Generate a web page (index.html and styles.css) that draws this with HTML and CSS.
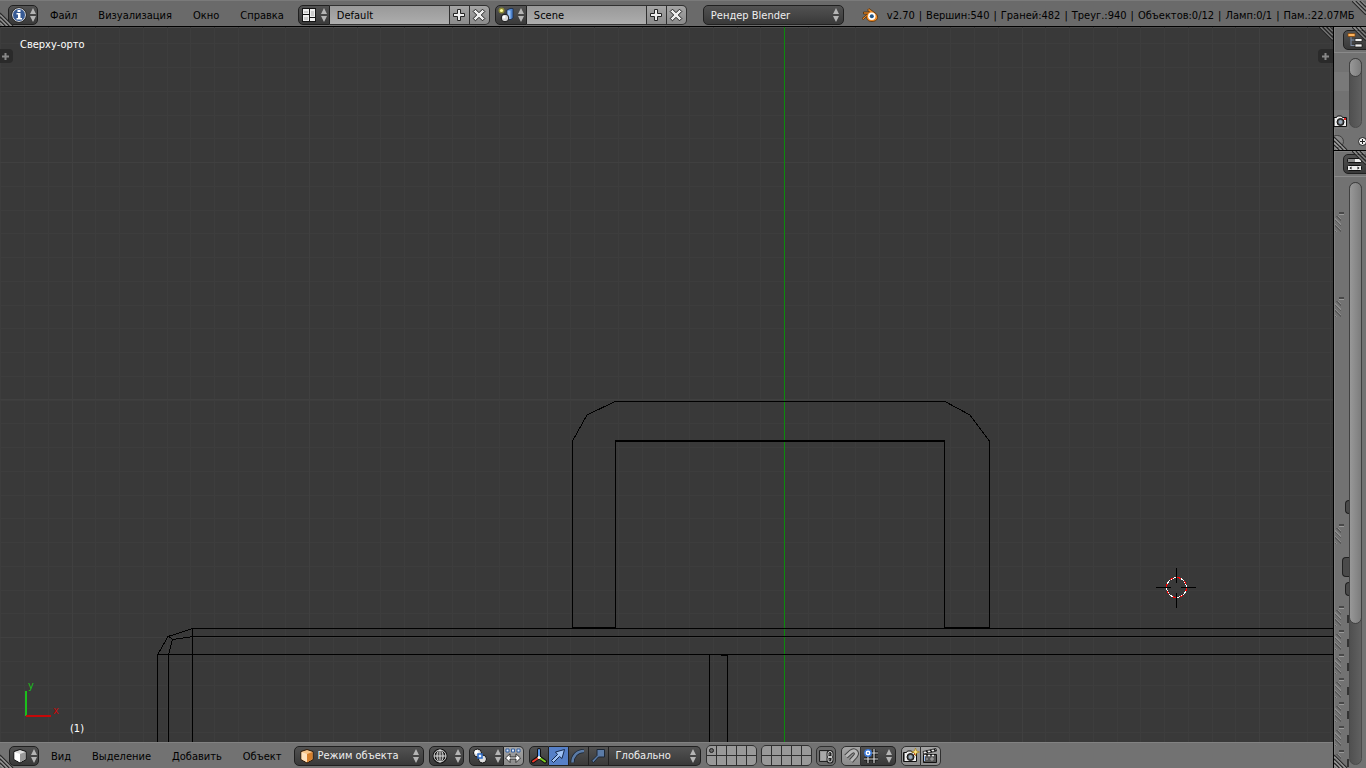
FILE: index.html
```html
<!DOCTYPE html>
<html lang="ru">
<head>
    <meta charset="utf-8">
    <title>Blender</title>
    <link rel="stylesheet" href="styles.css">
</head>

<body>

    <!-- shared shapes -->
    <svg class="defs" width="0" height="0" aria-hidden="true">
        <symbol id="arrows" viewBox="0 0 6 14">
            <path d="M3 0L6 6H0zM3 14L0 8H6z" fill="#b4b4b4"/>
        </symbol>
        <symbol id="corner-bl" viewBox="0 0 14 14">
            <path d="M0 1L13 14M0 5L9 14M0 9L5 14" stroke="#2a2a2a" stroke-width="1.3"/>
            <path d="M0 2.500L11.500 14M0 6.500L7.500 14M0 10.500L3.500 14" stroke="#b0b0b0"/>
        </symbol>
        <symbol id="corner-tr" viewBox="0 0 14 14">
            <path d="M0 0L14 14M4 0L14 10M8 0L14 6" stroke="#2a2a2a" stroke-width="1.3"/>
            <path d="M1.500 0L14 12.500M5.500 0L14 8.500M9.500 0L14 4.500" stroke="#a0a0a0"/>
        </symbol>
        <symbol id="plus" viewBox="0 0 16 16">
            <path d="M6.500 2.500h3v4h4v3h-4v4h-3v-4h-4v-3h4z" fill="#eee" stroke="#222"/>
        </symbol>
        <symbol id="cross" viewBox="0 0 16 16">
            <path d="M4.500 2.200L8 5.700l3.500-3.500 2.300 2.300L10.300 8l3.500 3.500-2.300 2.300L8 10.300l-3.500 3.500-2.300-2.300L5.700 8 2.200 4.500z" fill="#eee" stroke="#222"/>
        </symbol>
        <symbol id="camera" viewBox="0 0 16 16">
            <path d="M1.500 4.500h3l1-1.500h4l1 1.500h4v9h-13z" fill="#eee" stroke="#111"/>
            <path d="M2.500 5v8" stroke="#777"/>
            <circle cx="8.500" cy="9" r="3.500" fill="#444" stroke="#111"/>
            <circle cx="8.500" cy="9" r="2" fill="#9ab"/>
            <path d="M12 6h2" stroke="#d22" stroke-width="2"/>
        </symbol>
    </svg>

    <header class="bar info">
        <button class="dark editor" aria-label="Тип редактора">
            <svg width="16" height="16" viewBox="0 0 16 16">
                <circle cx="8" cy="8" r="6.500" fill="#375a94" stroke="#e8e8e8"/>
                <circle cx="8" cy="8" r="7.400" fill="none" stroke="#222" stroke-width=".7"/>
                <path d="M6.500 3h3v2h-3zM5.500 6h4v5h1.500v1.500h-5.500V11H7V7.500H5.500z" fill="#fff"/>
            </svg>
            <svg class="arrows" width="6" height="14"><use href="#arrows"/></svg>
        </button>
        <nav class="menus">
            <button>Файл</button>
            <button>Визуализация</button>
            <button>Окно</button>
            <button>Справка</button>
        </nav>
        <div class="group datablock layouts">
            <button class="dark" aria-label="Экраны">
                <svg width="16" height="16" viewBox="0 0 16 16">
                    <path d="M1 1h14v14H1z" fill="#151515"/>
                    <path d="M2 2h6v5H2zM2 8h6v6H2zM9 2h5v8H9zM9 11h5v3H9z" fill="#eee"/>
                    <path d="M3 4h4v2H3zM3 10h4v3H3zM10 4h3v5h-3z" fill="#ccc"/>
                </svg>
                <svg class="arrows" width="6" height="14"><use href="#arrows"/></svg>
            </button>
            <input type="text" value="Default" aria-label="Экран">
            <button class="tool" aria-label="Добавить экран"><svg width="16" height="16"><use href="#plus"/></svg></button>
            <button class="tool" aria-label="Удалить экран"><svg width="16" height="16"><use href="#cross"/></svg></button>
        </div>
        <div class="group datablock">
            <button class="dark" aria-label="Сцены">
                <svg width="16" height="16" viewBox="0 0 16 16">
                    <path d="M9 3l3-1.500h3V11l-2 1.500H9z" fill="#4d82cc" stroke="#182a48" stroke-width=".8"/>
                    <path d="M9.500 3.500h3V12h-3z" fill="#9dc3f4"/>
                    <circle cx="3.500" cy="3.500" r="3" fill="#8d8b35"/>
                    <circle cx="3.500" cy="3.500" r="1.600" fill="#fffb9c"/>
                    <circle cx="7" cy="11" r="3.800" fill="#d8d8d8" stroke="#111"/>
                    <circle cx="6" cy="10" r="1.500" fill="#fff"/>
                </svg>
                <svg class="arrows" width="6" height="14"><use href="#arrows"/></svg>
            </button>
            <input type="text" value="Scene" aria-label="Сцена">
            <button class="tool" aria-label="Добавить сцену"><svg width="16" height="16"><use href="#plus"/></svg></button>
            <button class="tool" aria-label="Удалить сцену"><svg width="16" height="16"><use href="#cross"/></svg></button>
        </div>
        <div class="dark select engine">
            <select aria-label="Движок рендера"><option>Рендер Blender</option></select>
            <svg class="arrows" width="6" height="14"><use href="#arrows"/></svg>
        </div>
        <svg class="logo" width="18" height="16" viewBox="0 0 18 16">
            <path d="M1 11.500L6.500 7H2.500V5h6L6.500 3l1.500-1.500 6.500 4.700c4 3.500 2 8.300-3.500 8.300-4 0-5.800-2.500-5.500-5L2.500 12.500z" fill="#f08a24" stroke="#53300c" stroke-width=".8"/>
            <circle cx="10.800" cy="9.300" r="3.700" fill="#fff"/>
            <circle cx="10.800" cy="9.300" r="2" fill="#265787"/>
        </svg>
        <div class="stats">
            <span>v2.70</span>
            <span>|</span>
            <span>Вершин:540</span>
            <span>|</span>
            <span>Граней:482</span>
            <span>|</span>
            <span>Треуг.:940</span>
            <span>|</span>
            <span>Объектов:0/12</span>
            <span>|</span>
            <span>Ламп:0/1</span>
            <span>|</span>
            <span>Пам.:22.07МБ</span>
        </div>
        <svg class="corner bl" width="14" height="14"><use href="#corner-bl"/></svg>
        <svg class="corner tr" width="14" height="14"><use href="#corner-tr"/></svg>
    </header>

    <div class="workspace">

        <main class="editor3d">
            <section class="view">
                <svg class="scene" width="100%" height="100%">
                    <defs>
                        <pattern id="minor" x="24" y="40" width="95" height="95" patternUnits="userSpaceOnUse">
                            <path d="M.5 0V95M24.500 0V95M48.500 0V95M71.500 0V95M0 .5H95M0 24.500H95M0 48.500H95M0 71.500H95" stroke="#3d3d3d"/>
                        </pattern>
                        <pattern id="major" x="309" y="135" width="475" height="475" patternUnits="userSpaceOnUse">
                            <path d="M.5 0V475M238.500 0V475M0 .5H475M0 237.500H475" stroke="#404040"/>
                        </pattern>
                    </defs>
                    <rect width="100%" height="100%" fill="url(#minor)"/>
                    <rect width="100%" height="100%" fill="url(#major)"/>
                    <path d="M784.500 0V2000" stroke="#0c8a0c"/>

                    <g class="wire">
                        <path d="M572.500 600.500V414L587 388L615 374.500H945L970 388L989.500 414V600.500H944.500V414M572.500 600.500H615.500V414"/>
                        <path d="M615 414H945" stroke-width="2"/>
                        <path d="M157.500 2000V628L168 609.500L193 601.500H4000M192.500 601V2000"/>
                        <path d="M168.500 2000V628L172.500 612.500L193 609.500H4000M168 609L173 612.500M157 627.500H4000"/>
                        <path d="M709.500 627V2000M727.500 628V2000M721 628.500H728"/>
                    </g>

                    <!-- 3D cursor -->
                    <g class="cursor">
                        <circle cx="1176.500" cy="560.500" r="10" stroke="#fff"/>
                        <circle cx="1176.500" cy="560.500" r="10" stroke="#f00" stroke-dasharray="3.927"/>
                        <path d="M1156 560.500h15M1181 560.500h15M1176.500 541v15M1176.500 566v15" stroke="#000"/>
                    </g>

                    <!-- axes -->
                    <path d="M26 664V689" stroke="#1bbf1b" stroke-width="2"/>
                    <path d="M26 689H51" stroke="#c60808" stroke-width="2"/>
                    <text x="28" y="662" fill="#1bbf1b">y</text>
                    <text x="53" y="687" fill="#c60808">x</text>
                </svg>
                <span class="viewname">Сверху-орто</span>
                <span class="objname">(1)</span>
                <button class="toggle left" aria-label="Панель инструментов"><svg width="7" height="7"><path d="M3.500 0V7M0 3.500H7" stroke="#888" stroke-width="2"/></svg></button>
                <button class="toggle right" aria-label="Свойства вида"><svg width="7" height="7"><path d="M3.500 0V7M0 3.500H7" stroke="#888" stroke-width="2"/></svg></button>
                <svg class="corner tr" width="14" height="14"><use href="#corner-tr"/></svg>
            </section>

            <footer class="bar tools">
                <button class="dark editor" aria-label="Тип редактора">
                    <svg width="16" height="16" viewBox="0 0 16 16">
                        <path d="M2 3.500L8 1.500l6 2v8L8 15l-6-3.500z" fill="#ddd" stroke="#111"/>
                        <path d="M2.500 4L8 6v8.300l-5.500-3z" fill="#fff"/>
                        <path d="M13.500 4L8 6v8.300l5.500-3z" fill="#999"/>
                    </svg>
                    <svg class="arrows" width="6" height="14"><use href="#arrows"/></svg>
                </button>
                <nav class="menus">
                    <button>Вид</button>
                    <button>Выделение</button>
                    <button>Добавить</button>
                    <button>Объект</button>
                </nav>
                <div class="dark select mode">
                    <svg width="16" height="16" viewBox="0 0 16 16">
                        <path d="M2 3.500L8 1.500l6 2v8L8 15l-6-3.500z" fill="#f7c58a" stroke="#2c1806"/>
                        <path d="M2.500 4L8 6v8.300l-5.500-3z" fill="#ffe3c0"/>
                        <path d="M13.500 4L8 6v8.300l5.500-3z" fill="#d57f2c"/>
                    </svg>
                    <select aria-label="Режим"><option>Режим объекта</option></select>
                    <svg class="arrows" width="6" height="14"><use href="#arrows"/></svg>
                </div>
                <button class="dark drop" aria-label="Отображение">
                    <svg width="16" height="16" viewBox="0 0 16 16" fill="none">
                        <circle cx="8" cy="8" r="6" stroke="#111" stroke-width="3"/>
                        <g stroke="#ddd">
                            <circle cx="8" cy="8" r="6"/>
                            <ellipse cx="8" cy="8" rx="3" ry="6"/>
                            <path d="M8 2v12M2 8h12"/>
                        </g>
                    </svg>
                    <svg class="arrows" width="6" height="14"><use href="#arrows"/></svg>
                </button>
                <div class="group">
                    <button class="dark drop" aria-label="Опорная точка">
                        <svg width="16" height="16" viewBox="0 0 16 16">
                            <circle cx="5.500" cy="5" r="4" fill="#ddd" stroke="#111"/>
                            <circle cx="10.500" cy="11" r="4" fill="#ddd" stroke="#111"/>
                            <circle cx="4.500" cy="4" r="2" fill="#fff"/>
                            <path d="M6 6h4v4H6z" fill="#eef5ff" stroke="#2a68c4" stroke-width="1.500"/>
                        </svg>
                        <svg class="arrows" width="6" height="14"><use href="#arrows"/></svg>
                    </button>
                    <button class="tool" aria-label="Только центры">
                        <svg width="16" height="16" viewBox="0 0 16 16">
                            <path d="M1 1h3v3H1zM6.500 1h3v3h-3zM12 1h3v3h-3z" fill="#dbe8fb" stroke="#335f9f"/>
                            <path d="M.5 10L5 5.800V9h6V5.800L15.500 10 11 14.500V11H5v3.500z" fill="#fff" stroke="#222" stroke-width=".9"/>
                        </svg>
                    </button>
                </div>
                <div class="group manipulator">
                    <button class="dark" aria-label="Манипулятор">
                        <svg width="16" height="16" viewBox="0 0 16 16" fill="none" stroke-linecap="round">
                            <path d="M8 2v7L2 13.500M8 9l6 4.500" stroke="#111" stroke-width="4"/>
                            <path d="M8 2v7" stroke="#5b9af0" stroke-width="2"/>
                            <path d="M8 9.500l-6 4" stroke="#f03a2b" stroke-width="2"/>
                            <path d="M8 9.500l6 4" stroke="#7ed321" stroke-width="2"/>
                            <circle cx="8" cy="9.500" r="1" fill="#fff" stroke="#fff"/>
                        </svg>
                    </button>
                    <button class="dark on" aria-label="Перемещение">
                        <svg width="16" height="16" viewBox="0 0 16 16">
                            <path d="M1.500 12.500l6-6L5.500 4l9-2.500-2.500 9-2.500-2-6 6z" fill="#9fc2f5" stroke="#14284c"/>
                        </svg>
                    </button>
                    <button class="dark" aria-label="Вращение">
                        <svg width="16" height="16" viewBox="0 0 16 16" fill="none">
                            <path d="M2.500 14.500C2.500 8 7 3 14 3" stroke="#1c2735" stroke-width="4"/>
                            <path d="M2.500 14.500C2.500 8 7 3 14 3" stroke="#5b7ba6" stroke-width="2.500"/>
                        </svg>
                    </button>
                    <button class="dark" aria-label="Масштаб">
                        <svg width="16" height="16" viewBox="0 0 16 16">
                            <path d="M1.500 13l5.500-5.500V1.500h7.500V9H8.500L3.500 14.500z" fill="#5b7ba6" stroke="#1c2735"/>
                        </svg>
                    </button>
                    <div class="dark select orient">
                        <select aria-label="Ориентация"><option>Глобально</option></select>
                        <svg class="arrows" width="6" height="14"><use href="#arrows"/></svg>
                    </div>
                </div>
                <div class="layers">
                    <button aria-label="Слой 1"><svg width="5" height="5"><circle cx="2.500" cy="2.500" r="2" fill="#666" stroke="#222"/></svg></button>
                    <button aria-label="Слой 2"></button><button aria-label="Слой 3"></button><button aria-label="Слой 4"></button><button aria-label="Слой 5"></button>
                    <button aria-label="Слой 11"></button><button aria-label="Слой 12"></button><button aria-label="Слой 13"></button><button aria-label="Слой 14"></button><button aria-label="Слой 15"></button>
                </div>
                <div class="layers">
                    <button aria-label="Слой 6"></button><button aria-label="Слой 7"></button><button aria-label="Слой 8"></button><button aria-label="Слой 9"></button><button aria-label="Слой 10"></button>
                    <button aria-label="Слой 16"></button><button aria-label="Слой 17"></button><button aria-label="Слой 18"></button><button aria-label="Слой 19"></button><button aria-label="Слой 20"></button>
                </div>
                <button class="tool lock on" aria-label="Связать слои со сценой">
                    <svg width="16" height="16" viewBox="0 0 16 16">
                        <path d="M1.500 2.500h11v11h-11z" fill="#999" stroke="#222"/>
                        <path d="M3 4h7v8H3z" fill="#aaa"/>
                        <rect x="10" y="3.500" width="4" height="6" rx="2" fill="none" stroke="#222" stroke-width="3"/>
                        <rect x="10" y="8.500" width="4" height="5.500" rx="2" fill="none" stroke="#222" stroke-width="3"/>
                        <rect x="10" y="3.500" width="4" height="6" rx="2" fill="none" stroke="#ddd"/>
                        <rect x="10" y="8.500" width="4" height="5.500" rx="2" fill="none" stroke="#ddd"/>
                    </svg>
                </button>
                <div class="group">
                    <button class="tool" aria-label="Привязка">
                        <svg width="16" height="16" viewBox="0 0 16 16" fill="none">
                            <path d="M3 8.500L8 4c3.500-3 7 .5 4.500 4L8 13" stroke="#444" stroke-width="5"/>
                            <path d="M3 8.500L8 4c3.500-3 7 .5 4.500 4L8 13" stroke="#b8b8b8" stroke-width="3"/>
                        </svg>
                    </button>
                    <button class="dark drop" aria-label="Элемент привязки">
                        <svg width="16" height="16" viewBox="0 0 16 16">
                            <path d="M5 1v14M11 1v14M1 5h14M1 11h14" stroke="#111" stroke-width="3"/>
                            <path d="M5 1v14M11 1v14M1 5h14M1 11h14" stroke="#ddd" stroke-width="1.200"/>
                            <circle cx="5" cy="5" r="3.200" fill="#fff" stroke="#3b79d8" stroke-width="1.500"/>
                            <circle cx="5" cy="5" r="1" fill="#3b79d8"/>
                        </svg>
                        <svg class="arrows" width="6" height="14"><use href="#arrows"/></svg>
                    </button>
                </div>
                <div class="group">
                    <button class="tool" aria-label="Рендер вида">
                        <svg width="18" height="16" viewBox="0 0 18 16">
                            <use href="#camera" width="16" height="16"/>
                            <path d="M13.500 0l1 3 3 1-3 1-1 3-1-3-3-1 3-1z" fill="#ffe680" stroke="#9b7410" stroke-width=".6"/>
                        </svg>
                    </button>
                    <button class="tool" aria-label="Рендер анимации">
                        <svg width="16" height="16" viewBox="0 0 16 16">
                            <path d="M1.500 6.500h13v8h-13z" fill="#555" stroke="#111"/>
                            <path d="M1 3.500L14 .5l.6 2.500L1.600 6z" fill="#eee" stroke="#111" stroke-width=".8"/>
                            <path d="M4 2.800l2 2M8 2l2 2M12 1l1.500 2" stroke="#111" stroke-width="1.500"/>
                            <path d="M2 7.500h12" stroke="#eee" stroke-width="1.500" stroke-dasharray="2"/>
                            <path d="M4 11h2M8 11h4M10 9v4" stroke="#aaa"/>
                            <path d="M2.500 8v5" stroke="#9cc3ff"/>
                        </svg>
                    </button>
                </div>
                <svg class="corner bl" width="14" height="14"><use href="#corner-bl"/></svg>
            </footer>
        </main>

        <aside class="side">
            <section class="outliner">
                <div class="sidehead">
                    <button class="dark" aria-label="Структура">
                        <svg width="16" height="16" viewBox="0 0 16 16">
                            <path d="M4 5v9M4 8h5M4 13.500h5" stroke="#7d8ca6" fill="none"/>
                            <path d="M1 1.500h7v3H1z" fill="#ffb45e" stroke="#7d4106" stroke-width=".7"/>
                            <path d="M8 6.500h7v3H8zM8 12h7v3H8z" fill="#eee" stroke="#111" stroke-width=".7"/>
                        </svg>
                        <svg class="arrows" width="6" height="14"><use href="#arrows"/></svg>
                    </button>
                    <svg class="corner tr" width="14" height="14"><use href="#corner-tr"/></svg>
                </div>
                <div class="sidebody">
                    <div class="tree">
                        <svg width="16" height="16"><use href="#camera"/></svg>
                    </div>
                    <div class="scroll"><div class="thumb"></div></div>
                </div>
                <div class="hscroll">
                    <div class="thumb"></div>
                    <svg width="9" height="9"><circle cx="4.500" cy="4.500" r="4" fill="#eee" stroke="#222"/><path d="M4.500 2v5M2 4.500h5" stroke="#222"/></svg>
                </div>
                <svg class="corner bl" width="14" height="14"><use href="#corner-bl"/></svg>
            </section>

            <section class="props">
                <div class="sidehead">
                    <button class="dark" aria-label="Свойства">
                        <svg width="16" height="16" viewBox="0 0 16 16">
                            <rect x=".5" y="2.500" width="14" height="4" rx="1" fill="#888" stroke="#111"/>
                            <path d="M8 3h6v3H8z" fill="#eee"/>
                            <rect x=".5" y="9.500" width="14" height="5" rx="1" fill="#eee" stroke="#111"/>
                            <path d="M4.500 10.500L2.500 12l2 1.500zM10.500 10.500l2 1.500-2 1.500z" fill="#111"/>
                        </svg>
                        <svg class="arrows" width="6" height="14"><use href="#arrows"/></svg>
                    </button>
                    <svg class="corner tr" width="14" height="14"><use href="#corner-tr"/></svg>
                </div>
                <div class="sidebody">
                    <div class="panels">
                        <div class="panel dims"></div>
                        <div class="panel output"><i class="stub"></i></div>
                        <div class="panel layer"><i class="stub tall"></i><i class="stub"></i></div>
                        <div class="panel closed"></div>
                        <div class="panel closed"></div>
                        <div class="panel closed"></div>
                        <div class="panel closed"></div>
                        <div class="panel closed"></div>
                        <div class="panel closed"></div>
                        <div class="panel closed"></div>
                    </div>
                    <div class="scroll"><div class="thumb"></div></div>
                </div>
                <svg class="corner bl" width="14" height="14"><use href="#corner-bl"/></svg>
            </section>
        </aside>

    </div>

</body>

</html>
```

FILE: styles.css
```css
* {
    box-sizing: border-box;
}
body {
    margin: 0;
    height: 100vh;
    display: flex;
    flex-direction: column;
    overflow: hidden;
    background: #000;
    color: #000;
    font: 11px/16px "DejaVu Sans Condensed", "DejaVu Sans", sans-serif;
}
svg {
    display: block;
    flex: none;
}
.defs {
    position: absolute;
}
button, input, select {
    font: inherit;
    color: inherit;
    margin: 0;
    padding: 0;
    border: 0;
    background: none;
    border-radius: 0;
}
button {
    display: flex;
    align-items: center;
    justify-content: center;
    flex: none;
}

/* header bars */
.bar {
    position: relative;
    flex: none;
    display: flex;
    align-items: center;
    height: 26px;
    background: #727272;
    border-top: 1px solid #828282;
    white-space: nowrap;
}
.info {
    background: #6a6a6a;
    border-top-color: #7a7a7a;
    padding: 3px 9px 0 8px;
    margin-bottom: 1px;
}
.tools {
    padding: 0 9px;
    gap: 5px;
}
.menus {
    display: flex;
    gap: 1px;
    margin-left: 2px;
}
.tools .menus {
    margin: 0 -3px;
}
.menus, .stats {
    padding-top: 2px;
}
.menus button {
    padding: 0 10px;
}
.stats {
    display: flex;
    flex: none;
    gap: 4px;
}

/* widgets */
.dark {
    height: 20px;
    background: linear-gradient(#525252, #393939);
    border: 1px solid #202020;
    border-radius: 5px;
    color: #eee;
}
.tool {
    width: 20px;
    height: 20px;
    background: linear-gradient(#a4a4a4, #8b8b8b);
    border: 1px solid #303030;
    border-radius: 5px;
}
.editor {
    width: 30px;
    gap: 3px;
}
.drop {
    width: 35px;
    gap: 7px;
}
.group {
    display: flex;
}
.group > * {
    border-radius: 0;
}
.group > * + * {
    border-left-width: 0;
}
.group > :first-child {
    border-radius: 5px 0 0 5px;
}
.group > :last-child {
    border-radius: 0 5px 5px 0;
    width: 20px;
}
.group > .drop {
    width: 35px;
}
.datablock {
    margin-left: 5px;
}
.layouts {
    margin-left: 4px;
}
.datablock .dark {
    width: 32px;
    gap: 4px;
}
.datablock input {
    width: 120px;
    height: 20px;
    padding: 1px 7px 0;
    background: linear-gradient(#999, #adadad);
    border: 1px solid #303030;
    border-left-width: 0;
}
.select {
    position: relative;
    display: flex;
    align-items: center;
}
.select select {
    appearance: none;
    flex: 1;
    align-self: stretch;
    padding: 1px 14px 0 7px;
    outline: 0;
}
.select .arrows {
    position: absolute;
    right: 4px;
    pointer-events: none;
}
.engine {
    width: 141px;
    margin: 0 17px 0 16px;
}
.mode {
    width: 130px;
    padding-left: 4px;
}
.mode select {
    padding-left: 3px;
}
.manipulator .dark {
    width: 20px;
}
.manipulator .on {
    background: #5680c8;
}
.manipulator .orient {
    width: 92px;
}
.lock {
    background: #6b6b6b;
}
.layers {
    display: grid;
    grid-template-columns: repeat(5, 9px);
    grid-auto-rows: 9px;
    gap: 1px;
    width: 51px;
    margin-right: -1px;
    border: 1px solid #303030;
    border-radius: 5px;
    background: #303030;
    overflow: hidden;
}
.layers button {
    background: #999;
}
.logo {
    margin-right: 8px;
}

/* area corners */
.corner {
    position: absolute;
    pointer-events: none;
}
.bl {
    left: 0;
    bottom: 0;
}
.tr {
    right: 0;
    top: 0;
}

.workspace {
    flex: 1;
    min-height: 0;
    display: flex;
    gap: 1px;
}
.editor3d {
    flex: 1;
    min-width: 0;
    display: flex;
    flex-direction: column;
}
.view {
    position: relative;
    flex: 1;
    min-height: 0;
    overflow: hidden;
    background: #393939;
    box-shadow: inset 1px 1px #4c4c4c;
    color: #fff;
}
.scene {
    position: absolute;
}
.scene text {
    font-size: 11px;
}
.wire {
    fill: none;
    stroke: #000;
    shape-rendering: crispEdges;
}
.cursor {
    fill: none;
    shape-rendering: crispEdges;
}
.viewname {
    position: absolute;
    left: 20px;
    top: 10px;
}
.objname {
    position: absolute;
    left: 70px;
    bottom: 5px;
}
.toggle {
    position: absolute;
    top: 22px;
    width: 13px;
    height: 14px;
    background: #2a2a2a;
}
.left {
    left: 0;
    padding-right: 2px;
    border-radius: 0 4px 4px 0;
}
.right {
    right: 0;
    width: 15px;
    padding-right: 1px;
    border-radius: 4px 0 0 4px;
}

/* right column */
.side {
    width: 32px;
    flex: none;
    display: flex;
    flex-direction: column;
    gap: 1px;
}
.side section {
    position: relative;
    display: flex;
    flex-direction: column;
    overflow: hidden;
    background: #727272;
    box-shadow: inset 1px 1px #828282;
}
.outliner {
    height: 123px;
    flex: none;
}
.props {
    flex: 1;
    min-height: 0;
}
.sidehead {
    flex: none;
    display: flex;
    height: 26px;
    padding: 3px 0 0 9px;
    border-bottom: 1px solid #8a8a8a;
}
.sidehead .dark {
    width: 34px;
    gap: 4px;
}
.sidebody {
    flex: 1;
    min-height: 0;
    display: flex;
    padding: 5px 4px 3px 0;
}
.outliner .sidebody {
    padding-bottom: 1px;
}
.tree {
    flex: 1;
    min-width: 0;
    display: flex;
    align-items: flex-end;
    overflow: hidden;
    margin: -5px 0 -1px;
    background: repeating-linear-gradient(#727272 0 19px, #797979 19px 38px);
}
.tree svg {
    margin-left: -2px;
}
.scroll {
    width: 13px;
    flex: none;
    border: 1px solid #4a4a4a;
    border-radius: 7px;
    background: linear-gradient(90deg, #505050, #606060);
}
.thumb {
    height: 19px;
    margin: -1px;
    border: 1px solid #404040;
    border-radius: 7px;
    background: linear-gradient(90deg, #989898, #7c7c7c);
}
.props .thumb {
    height: 76%;
}
.hscroll {
    flex: none;
    display: flex;
    justify-content: space-between;
    align-items: center;
    height: 21px;
    padding-top: 3px;
    margin-right: -1px;
}
.hscroll .thumb {
    width: 14px;
    height: 13px;
    margin: 0 0 0 -4px;
}

/* panels are mostly hidden by the narrow column */
.panels {
    flex: 1;
    min-width: 0;
    margin: -5px 0 -3px;
    padding-top: 35px;
    overflow: hidden;
}
.panel {
    position: relative;
    display: flex;
    flex-direction: column;
    align-items: flex-end;
    height: 24px;
}
.panel::before {
    content: "";
    position: absolute;
    left: 5px;
    top: 0;
    width: 5px;
    height: 2px;
    background: #484848;
    border-bottom: 1px solid #999;
}
.panel::after {
    content: "";
    position: absolute;
    left: 1px;
    top: 4px;
    width: 6px;
    height: 16px;
    background: repeating-linear-gradient(45deg, #5a5a5a 0 1px, #8a8a8a 1px 2px, #727272 2px 4px);
}
.dims {
    height: 85px;
}
.output {
    height: 227px;
    padding-top: 203px;
}
.layer {
    height: 82px;
    gap: 5px;
    padding-top: 33px;
}
.closed {
    border-right: 2px solid #333;
    border-image: linear-gradient(transparent 9px, #333 9px 17px, transparent 17px) 1;
}
.stub {
    width: 4px;
    height: 14px;
    flex: none;
    border: 1px solid #202020;
    border-right: 0;
    border-radius: 4px 0 0 4px;
    background: #4a4a4a;
}
.tall {
    width: 7px;
    height: 20px;
}
```
